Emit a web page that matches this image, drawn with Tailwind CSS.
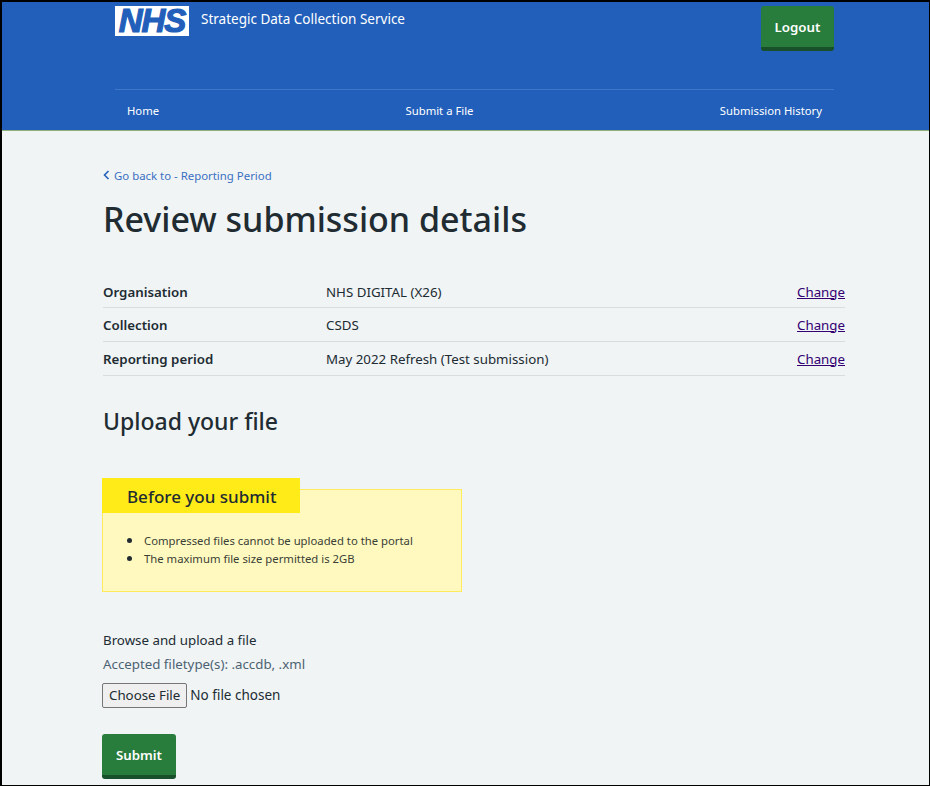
<!doctype html>
<html lang="en"><head><meta charset="utf-8"><title>Review submission details</title>
<script src="https://cdn.jsdelivr.net/npm/@tailwindcss/browser@4"></script></head>
<body class="m-0">
<div class="w-[930px] h-[786px] overflow-hidden border-t-2 border-l-2 border-r border-b border-black bg-[#f0f4f5] text-[#212b32] font-['Noto_Sans','Open_Sans',sans-serif]">
  <header class="h-[129px] bg-[#225fba] border-b border-[#8fb07a] pl-[113px] pr-[95px]">
    <div class="h-[88px] border-b border-[#3f77c8] flex items-start justify-between">
      <div class="flex items-start pt-[4px]">
        <div class="w-[74px] h-[30px] bg-white flex items-center justify-center">
          <span class="font-['Liberation_Sans'] font-bold italic text-[33px] leading-[30px] tracking-[-1px] text-[#225fba] [-webkit-text-stroke:1.2px_#225fba]">NHS</span>
        </div>
        <span class="ml-[12px] text-[13.5px] leading-[24px] text-white mt-[1px]">Strategic Data Collection Service</span>
      </div>
      <a class="mt-[4px] w-[73px] h-[45px] rounded-[3px] bg-[#287d3c] border-b-[4px] border-[#17502a] flex items-center justify-center text-white text-[13.3px] font-semibold pt-[2px]">Logout</a>
    </div>
    <nav class="h-[40px] flex items-center justify-between px-[12px] text-[11.3px] text-white pt-[3px]">
      <a>Home</a><a>Submit a File</a><a>Submission History</a>
    </nav>
  </header>
  <main class="pl-[101px] pr-[84px]">
    <a class="mt-[36px] flex items-center text-[11.4px] leading-[18px] text-[#3a70c2]">
      <svg class="w-[7px] h-[10px] mb-[3px]" viewBox="0 0 7 10" fill="none" stroke="#225fba" stroke-width="1.6"><path d="M5.5 1 L1.5 5 L5.5 9"/></svg>
      <span class="ml-[4px]">Go back to - Reporting Period</span>
    </a>
    <h1 class="mt-[10px] text-[34px] leading-[48px] font-medium">Review submission details</h1>
    <dl class="mt-[31px] text-[13.3px]">
      <div class="h-[34px] pt-[4px] flex items-center border-b border-[#d8dde0]"><dt class="w-[223px] font-semibold">Organisation</dt><dd class="flex-1">NHS DIGITAL (X26)</dd><a class="underline text-[#330072]">Change</a></div>
      <div class="h-[34px] pt-[2px] flex items-center border-b border-[#d8dde0]"><dt class="w-[223px] font-semibold">Collection</dt><dd class="flex-1">CSDS</dd><a class="underline text-[#330072]">Change</a></div>
      <div class="h-[34px] pt-[2px] flex items-center border-b border-[#d8dde0]"><dt class="w-[223px] font-semibold">Reporting period</dt><dd class="flex-1">May 2022 Refresh (Test submission)</dd><a class="underline text-[#330072]">Change</a></div>
    </dl>
    <h2 class="mt-[26px] text-[23px] leading-[38px] font-medium">Upload your file</h2>
    <section class="mt-[38px] -ml-px w-[360px] relative pt-[11px]">
      <div class="absolute top-0 left-0 w-[198px] h-[35px] bg-[#ffeb18] pl-[25px] text-[17px] leading-[37px] font-medium">Before you submit</div>
      <div class="h-[103px] bg-[#fff9c0] border border-[#ffeb5c] pt-[40px] pl-[41px] text-[11.3px] leading-[18px] text-[#3a3f35]">
        <ul class="list-disc pl-0 marker:text-[15px] marker:text-[#212b32]">
          <li class="h-[18px]">Compressed files cannot be uploaded to the portal</li>
          <li class="h-[18px]">The maximum file size permitted is 2GB</li>
        </ul>
      </div>
    </section>
    <p class="mt-[36px] text-[13.3px] leading-[24px]">Browse and upload a file</p>
    <p class="text-[13.3px] leading-[24px] text-[#4c6272]">Accepted filetype(s): .accdb, .xml</p>
    <div class="mt-[7px] -ml-px flex items-center">
      <input type="file" class="text-[13.5px] font-['Noto_Sans'] file:h-[25px] file:px-[6px] file:text-[13.3px] file:border file:border-[#767676] file:rounded-[2px] file:bg-[#efefef] file:text-[#212b32] file:mr-[3px]">
    </div>
    <a class="mt-[26px] -ml-px w-[74px] h-[45px] rounded-[3px] bg-[#287d3c] border-b-[4px] border-[#17502a] flex items-center justify-center text-white text-[13.3px] font-semibold pt-[2px]">Submit</a>
  </main>
</div>
</body></html>
